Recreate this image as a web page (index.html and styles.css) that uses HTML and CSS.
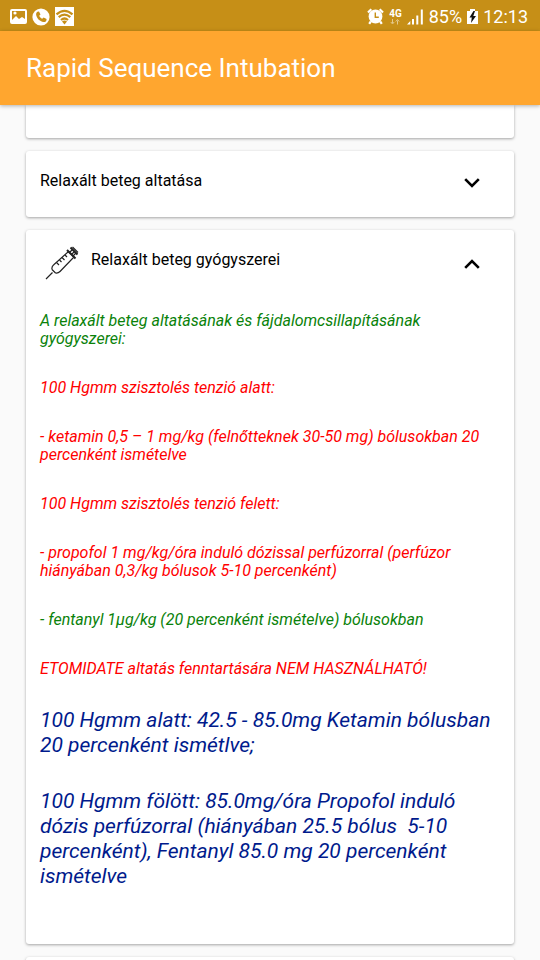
FILE: index.html
```html
<!DOCTYPE html>
<html lang="hu">
<head>
<meta charset="utf-8">
<meta name="viewport" content="width=device-width, initial-scale=1">
<title>Rapid Sequence Intubation</title>
<link rel="stylesheet" href="styles.css">
</head>
<body>
<div class="statusbar">
  <div class="status-group">
    <svg width="17" height="17" viewBox="0 0 17 17"><path fill="#fff" fill-rule="evenodd" d="M2 1h13q2 0 2 2v11q0 2-2 2H2q-2 0-2-2V3q0-2 2-2zM2 3v9l4-4 3 3 3-2 3 2V3z"/><circle cx="5" cy="5" r="1.6" fill="#fff"/></svg>
    <svg width="18" height="18" viewBox="0 0 18 18"><circle cx="9" cy="9" r="8.6" fill="#fff"/><path fill="#c68f17" d="M5.400 3.700 7 3.400l1.500 3-1.300 1.400c.6 1.400 1.600 2.400 3 3l1.400-1.300 3 1.500-.3 1.700c-.4 1-1.600 1.500-2.700 1.300C7.600 13.300 4.500 10 4.100 6.400c0-1 .4-2.200 1.300-2.700z"/></svg>
    <svg width="19" height="19" viewBox="0 0 19 19"><path fill="#fff" d="M0 0h19v19H0z"/><g fill="none" stroke="#c68f17" stroke-width="2.200"><path d="M1.500 7.300q8-7 16 0M3.700 10.200q5.800-5 11.600 0M6 13q3.500-3 7 0"/></g><path fill="#c68f17" d="m7 14.600q2.500-2 5 0l-2.500 3z"/></svg>
  </div>
  <div class="status-group">
    <svg width="17" height="17" viewBox="0 0 17 17"><circle cx="8.500" cy="8.500" r="6.900" fill="#fff"/><path d="m1 4.500 3.300-3.300M12.700 1.200 16 4.500M3.800 13.500l-1.600 2.300M13.200 13.500l1.600 2.300" stroke="#fff" stroke-width="2.200"/><path d="M8.300 4.500v4.700h3.500" fill="none" stroke="#c68f17" stroke-width="1.400"/></svg>
    <div class="network"><span>4G</span><svg width="10" height="6" viewBox="0 0 10 6"><path d="M2.500 0v4M.8 3l1.700 2L4.200 3M7.500 5.500v-4M5.800 2.500l1.700-2 1.700 2" fill="none" stroke="#e4c98d"/></svg></div>
    <svg width="17" height="17" viewBox="0 0 17 17"><path fill="#fff" d="M0 16.500 3.300 13v3.500zM5 11h2v5.500H5zM9.300 7.500h2v9h-2zM13.800 1.500h2v15h-2z"/></svg>
    <span class="status-text">85%</span>
    <svg width="11" height="17" viewBox="0 0 11 17"><path fill="#fff" d="M3 1h5v2h3v13H0V3h3z"/><path fill="#111" d="m6.500 3-4 6.500h2.300L4 15l5-7H6.300L8 3z"/></svg>
    <span class="status-text">12:13</span>
  </div>
</div>
<header class="appbar"><h1>Rapid Sequence Intubation</h1></header>
<main class="cards">
  <section class="card card-passed"></section>
  <section class="card">
    <button class="card-head" type="button" aria-expanded="false">
      <span class="card-title">Relaxált beteg altatása</span>
      <svg class="chevron" width="16" height="12" viewBox="0 0 16 12"><path d="m1.200 1.200 6.800 6.800 6.800-6.800"/></svg>
    </button>
  </section>
  <section class="card card-open">
    <button class="card-head" type="button" aria-expanded="true">
      <svg class="syringe" width="34" height="34" viewBox="0 0 34 34"><g fill="none" stroke="#222" stroke-width="1.200"><path d="M1 33 7.500 26.500M7 23.500l3.500 3.500M7 23.500q-.5-3 1.500-4.500L23.500 5.500l5.500 5.500L15 25.500q-2 2-4.500 1.500M24.500 6.500l3-3M28 10l3-3M27.500 1l5.500 5.500M26.500 8.500l3-3"/><path d="m11.500 16.500 2.500 2.500M14.500 14l2 2M17 11.500l2.500 2.500M20 9l2 2"/></g><path d="m22 4 8.500 8.500M25.500 1.500l7 7" stroke="#222" stroke-width="2"/></svg>
      <span class="card-title">Relaxált beteg gyógyszerei</span>
      <svg class="chevron" width="16" height="12" viewBox="0 0 16 12"><path d="m1.200 10.800L8 4l6.800 6.800"/></svg>
    </button>
    <div class="notes">
      <p class="green">A relaxált beteg altatásának és fájdalomcsillapításának gyógyszerei:</p>
      <p>100 Hgmm szisztolés tenzió alatt:</p>
      <p>- ketamin 0,5 – 1 mg/kg (felnőtteknek 30-50 mg) bólusokban 20 percenként ismételve</p>
      <p>100 Hgmm szisztolés tenzió felett:</p>
      <p>- propofol 1 mg/kg/óra induló dózissal perfúzorral (perfúzor hiányában 0,3/kg bólusok 5-10 percenként)</p>
      <p class="green">- fentanyl 1µg/kg (20 percenként ismételve) bólusokban</p>
      <p>ETOMIDATE altatás fenntartására NEM HASZNÁLHATÓ!</p>
    </div>
    <div class="doses">
      <p>100 Hgmm alatt: 42.5 - 85.0mg Ketamin bólusban 20 percenként ismétlve;</p>
      <p>100 Hgmm fölött: 85.0mg/óra Propofol induló dózis perfúzorral (hiányában 25.5 bólus&nbsp; 5-10 percenként), Fentanyl 85.0 mg 20 percenként ismételve</p>
    </div>
  </section>
  <section class="card card-next"></section>
</main>
</body>
</html>
```
FILE: styles.css
```css
* {
  box-sizing: border-box;
}

body {
  margin: 0;
  height: 100vh;
  display: flex;
  flex-direction: column;
  overflow: hidden;
  background: #fafafa;
  color: #000;
  font-family: Roboto, sans-serif;
}

h1,
p {
  margin: 0;
  font-weight: 400;
}

svg {
  display: block;
  flex: none;
}

.statusbar {
  flex: none;
  display: flex;
  justify-content: space-between;
  align-items: center;
  padding: 2px 12px 0 10px;
  height: 31px;
  background: #c68f17;
  color: #fff;
}

.status-group {
  display: flex;
  align-items: center;
  gap: 5px;
}

.network {
  display: flex;
  flex-direction: column;
  align-items: center;
  font-size: 10px;
  line-height: 10px;
  font-weight: 700;
}

.status-text {
  font-size: 18px;
  line-height: 24px;
}

.appbar {
  flex: none;
  position: relative;
  padding: 21px 26px;
  background: #ffa62f;
  color: #fff;
  box-shadow: 0 1px 4px rgba(0, 0, 0, 0.3);
}

.appbar h1 {
  font-size: 26px;
  line-height: 32px;
}

.cards {
  flex: 1;
  min-height: 0;
  overflow: hidden;
  display: flex;
  flex-direction: column;
  gap: 13px;
  padding: 0 26px;
}

.card {
  flex: none;
  padding: 16px 14px;
  background: #fff;
  border-radius: 3px;
  box-shadow: 0 1px 3px rgba(0, 0, 0, 0.35);
}

.card-passed {
  padding-bottom: 17px;
  border-radius: 0 0 3px 3px;
}

.card-open {
  padding-bottom: 55px;
}

.card-head {
  display: flex;
  align-items: flex-start;
  width: 100%;
  min-height: 34px;
  padding: 0 20px 0 0;
  border: 0;
  background: none;
  color: inherit;
  font: inherit;
  text-align: left;
}

.card-title {
  flex: 1;
  padding-top: 4px;
  font-size: 16px;
  line-height: 20px;
}

.chevron {
  margin-top: 11px;
  fill: none;
  stroke: #000;
  stroke-width: 2.6;
}

.syringe {
  margin: 0 12px 0 5px;
}

.notes,
.doses {
  display: flex;
  flex-direction: column;
  font-style: italic;
}

.notes {
  gap: 31px;
  margin-top: 32px;
  color: #f00;
  font-size: 16px;
  line-height: 18px;
}

.notes .green {
  color: #0a820a;
}

.doses {
  gap: 31px;
  margin-top: 30px;
  color: #001a8c;
  font-size: 21px;
  line-height: 25px;
}
```
